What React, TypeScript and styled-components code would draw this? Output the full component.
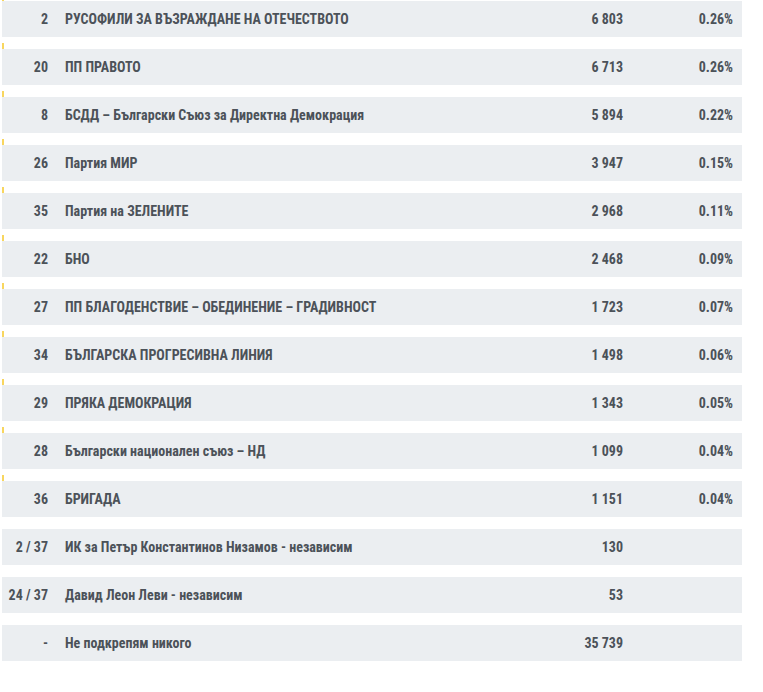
import React from "react";
import styled, { createGlobalStyle } from "styled-components";

const Global = createGlobalStyle`
  html, body { margin: 0; padding: 0; background: #ffffff; }
  body { font-family: "Roboto", "Liberation Sans", sans-serif; }
`;

type Item = { num: string; name: string; votes: string; pct?: string; bar?: boolean };

const items: Item[] = [
  { num: "2", name: "РУСОФИЛИ ЗА ВЪЗРАЖДАНЕ НА ОТЕЧЕСТВОТО", votes: "6 803", pct: "0.26%", bar: true },
  { num: "20", name: "ПП ПРАВОТО", votes: "6 713", pct: "0.26%", bar: true },
  { num: "8", name: "БСДД – Български Съюз за Директна Демокрация", votes: "5 894", pct: "0.22%", bar: true },
  { num: "26", name: "Партия МИР", votes: "3 947", pct: "0.15%", bar: true },
  { num: "35", name: "Партия на ЗЕЛЕНИТЕ", votes: "2 968", pct: "0.11%", bar: true },
  { num: "22", name: "БНО", votes: "2 468", pct: "0.09%", bar: true },
  { num: "27", name: "ПП БЛАГОДЕНСТВИЕ – ОБЕДИНЕНИЕ – ГРАДИВНОСТ", votes: "1 723", pct: "0.07%", bar: true },
  { num: "34", name: "БЪЛГАРСКА ПРОГРЕСИВНА ЛИНИЯ", votes: "1 498", pct: "0.06%", bar: true },
  { num: "29", name: "ПРЯКА ДЕМОКРАЦИЯ", votes: "1 343", pct: "0.05%", bar: true },
  { num: "28", name: "Български национален съюз – НД", votes: "1 099", pct: "0.04%", bar: true },
  { num: "36", name: "БРИГАДА", votes: "1 151", pct: "0.04%", bar: true },
  { num: "2 / 37", name: "ИК за Петър Константинов Низамов - независим", votes: "130" },
  { num: "24 / 37", name: "Давид Леон Леви - независим", votes: "53" },
  { num: "-", name: "Не подкрепям никого", votes: "35 739" },
];

const List = styled.div`
  display: flex;
  flex-direction: column;
  width: 740px;
  margin: -11px 0 0 2px;
`;

const Entry = styled.div`
  display: flex;
  flex-direction: column;
  padding-top: 6px;
`;

const BarTrack = styled.div`
  height: 6px;
  display: flex;
`;

const Bar = styled.div`
  height: 100%;
  min-width: 2px;
  background: #f8d65e;
`;

const Row = styled.div`
  display: grid;
  grid-template-columns: 46px 1fr 90px 110px;
  align-items: center;
  height: 36px;
  padding-right: 9px;
  background: #ebeef1;
  color: #4c5259;
  font-family: "Roboto", "Liberation Sans", sans-serif;
  font-stretch: condensed;
  font-weight: 700;
  font-size: 14px;
  white-space: nowrap;
`;

const Num = styled.span`
  text-align: right;
`;

const Name = styled.span`
  padding-left: 17px;
`;

const Votes = styled.span`
  grid-column: 3;
  text-align: right;
`;

const Pct = styled.span`
  grid-column: 4;
  text-align: right;
`;

export default function App() {
  return (
    <>
      <Global />
      <List>
        {items.map((it, i) => (
          <Entry key={i}>
            <BarTrack>
              {it.bar && <Bar style={{ width: `${parseFloat(it.pct || "0")}%` }} />}
            </BarTrack>
            <Row>
              <Num>{it.num}</Num>
              <Name>{it.name}</Name>
              <Votes>{it.votes}</Votes>
              {it.pct && <Pct>{it.pct}</Pct>}
            </Row>
          </Entry>
        ))}
      </List>
    </>
  );
}
